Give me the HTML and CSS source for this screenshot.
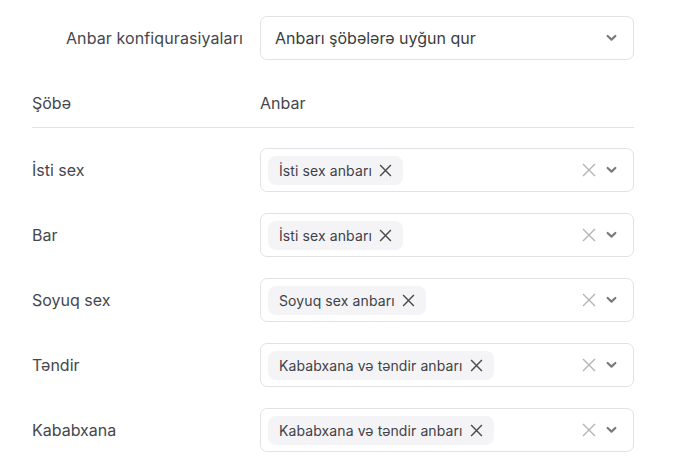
FILE: index.html
```html
<!DOCTYPE html>
<html>
<head>
<meta charset="utf-8">
<link rel="stylesheet" href="styles.css">
</head>
<body>
<div class="page">
  <div class="config">
    <div class="config-label">Anbar konfiqurasiyaları</div>
    <div class="select">
      <span class="value">Anbarı şöbələrə uyğun qur</span>
      <svg class="chev" viewBox="0 0 12 8" width="11" height="8"><path d="M1.8 1.8 L6 5.8 L10.2 1.8" fill="none" stroke="#7a7a7a" stroke-width="2.4" stroke-linecap="round" stroke-linejoin="round"/></svg>
    </div>
  </div>
  <div class="head">
    <div>Şöbə</div>
    <div>Anbar</div>
  </div>
  <div class="rows">
    <div class="row">
      <div class="name">İsti sex</div>
      <div class="select multi">
        <span class="tag">İsti sex anbarı<svg class="tx" viewBox="0 0 12 12" width="13" height="13"><path d="M1 1 L11 11 M11 1 L1 11" stroke="#4a4a4a" stroke-width="1.3"/></svg></span>
        <span class="icons"><svg class="clr" viewBox="0 0 14 14" width="14" height="14"><path d="M1 1 L13 13 M13 1 L1 13" stroke="#b4b4b4" stroke-width="1.4"/></svg><svg class="chev" viewBox="0 0 12 8" width="11" height="8"><path d="M1.8 1.8 L6 5.8 L10.2 1.8" fill="none" stroke="#7a7a7a" stroke-width="2.4" stroke-linecap="round" stroke-linejoin="round"/></svg></span>
      </div>
    </div>
    <div class="row">
      <div class="name">Bar</div>
      <div class="select multi">
        <span class="tag">İsti sex anbarı<svg class="tx" viewBox="0 0 12 12" width="13" height="13"><path d="M1 1 L11 11 M11 1 L1 11" stroke="#4a4a4a" stroke-width="1.3"/></svg></span>
        <span class="icons"><svg class="clr" viewBox="0 0 14 14" width="14" height="14"><path d="M1 1 L13 13 M13 1 L1 13" stroke="#b4b4b4" stroke-width="1.4"/></svg><svg class="chev" viewBox="0 0 12 8" width="11" height="8"><path d="M1.8 1.8 L6 5.8 L10.2 1.8" fill="none" stroke="#7a7a7a" stroke-width="2.4" stroke-linecap="round" stroke-linejoin="round"/></svg></span>
      </div>
    </div>
    <div class="row">
      <div class="name">Soyuq sex</div>
      <div class="select multi">
        <span class="tag">Soyuq sex anbarı<svg class="tx" viewBox="0 0 12 12" width="13" height="13"><path d="M1 1 L11 11 M11 1 L1 11" stroke="#4a4a4a" stroke-width="1.3"/></svg></span>
        <span class="icons"><svg class="clr" viewBox="0 0 14 14" width="14" height="14"><path d="M1 1 L13 13 M13 1 L1 13" stroke="#b4b4b4" stroke-width="1.4"/></svg><svg class="chev" viewBox="0 0 12 8" width="11" height="8"><path d="M1.8 1.8 L6 5.8 L10.2 1.8" fill="none" stroke="#7a7a7a" stroke-width="2.4" stroke-linecap="round" stroke-linejoin="round"/></svg></span>
      </div>
    </div>
    <div class="row">
      <div class="name">Təndir</div>
      <div class="select multi">
        <span class="tag">Kababxana və təndir anbarı<svg class="tx" viewBox="0 0 12 12" width="13" height="13"><path d="M1 1 L11 11 M11 1 L1 11" stroke="#4a4a4a" stroke-width="1.3"/></svg></span>
        <span class="icons"><svg class="clr" viewBox="0 0 14 14" width="14" height="14"><path d="M1 1 L13 13 M13 1 L1 13" stroke="#b4b4b4" stroke-width="1.4"/></svg><svg class="chev" viewBox="0 0 12 8" width="11" height="8"><path d="M1.8 1.8 L6 5.8 L10.2 1.8" fill="none" stroke="#7a7a7a" stroke-width="2.4" stroke-linecap="round" stroke-linejoin="round"/></svg></span>
      </div>
    </div>
    <div class="row">
      <div class="name">Kababxana</div>
      <div class="select multi">
        <span class="tag">Kababxana və təndir anbarı<svg class="tx" viewBox="0 0 12 12" width="13" height="13"><path d="M1 1 L11 11 M11 1 L1 11" stroke="#4a4a4a" stroke-width="1.3"/></svg></span>
        <span class="icons"><svg class="clr" viewBox="0 0 14 14" width="14" height="14"><path d="M1 1 L13 13 M13 1 L1 13" stroke="#b4b4b4" stroke-width="1.4"/></svg><svg class="chev" viewBox="0 0 12 8" width="11" height="8"><path d="M1.8 1.8 L6 5.8 L10.2 1.8" fill="none" stroke="#7a7a7a" stroke-width="2.4" stroke-linecap="round" stroke-linejoin="round"/></svg></span>
      </div>
    </div>
  </div>
</div>
</body>
</html>
```
FILE: styles.css
```css
html, body {
  margin: 0;
  padding: 0;
  background: #fff;
}
body {
  font-family: Inter, "Noto Sans", sans-serif;
  color: #45474d;
  font-size: 16px;
  font-weight: 380;
}
.page {
  width: 602px;
  margin-left: 32px;
  padding-top: 16px;
}
.config {
  display: grid;
  grid-template-columns: 228px 1fr;
  align-items: center;
}
.config-label {
  text-align: right;
  padding-right: 17px;
  letter-spacing: 0.1px;
}
.select {
  height: 44px;
  box-sizing: border-box;
  border: 1px solid #e2e2e4;
  border-radius: 7px;
  display: flex;
  align-items: center;
  justify-content: space-between;
  padding: 0 16px 0 14px;
}
.select .value {
  color: #3a3c40;
}
.head {
  display: grid;
  grid-template-columns: 228px 1fr;
  margin-top: 31px;
  line-height: 24px;
  padding-bottom: 12px;
  border-bottom: 1px solid #e3e3e5;
}
.rows {
  padding-top: 20px;
}
.row {
  display: grid;
  grid-template-columns: 228px 1fr;
  align-items: center;
  margin-bottom: 21px;
}
.select.multi {
  padding: 0 16px 0 7px;
}
.tag {
  display: inline-flex;
  align-items: center;
  background: #f4f4f6;
  border-radius: 8px;
  height: 29px;
  padding: 0 11px 0 11px;
  font-size: 14px;
  letter-spacing: 0.1px;
  color: #3f4147;
  gap: 7px;
}
.tx {
  display: block;
}
.icons {
  display: flex;
  align-items: center;
  gap: 10px;
}
.clr, .chev {
  display: block;
}
```
